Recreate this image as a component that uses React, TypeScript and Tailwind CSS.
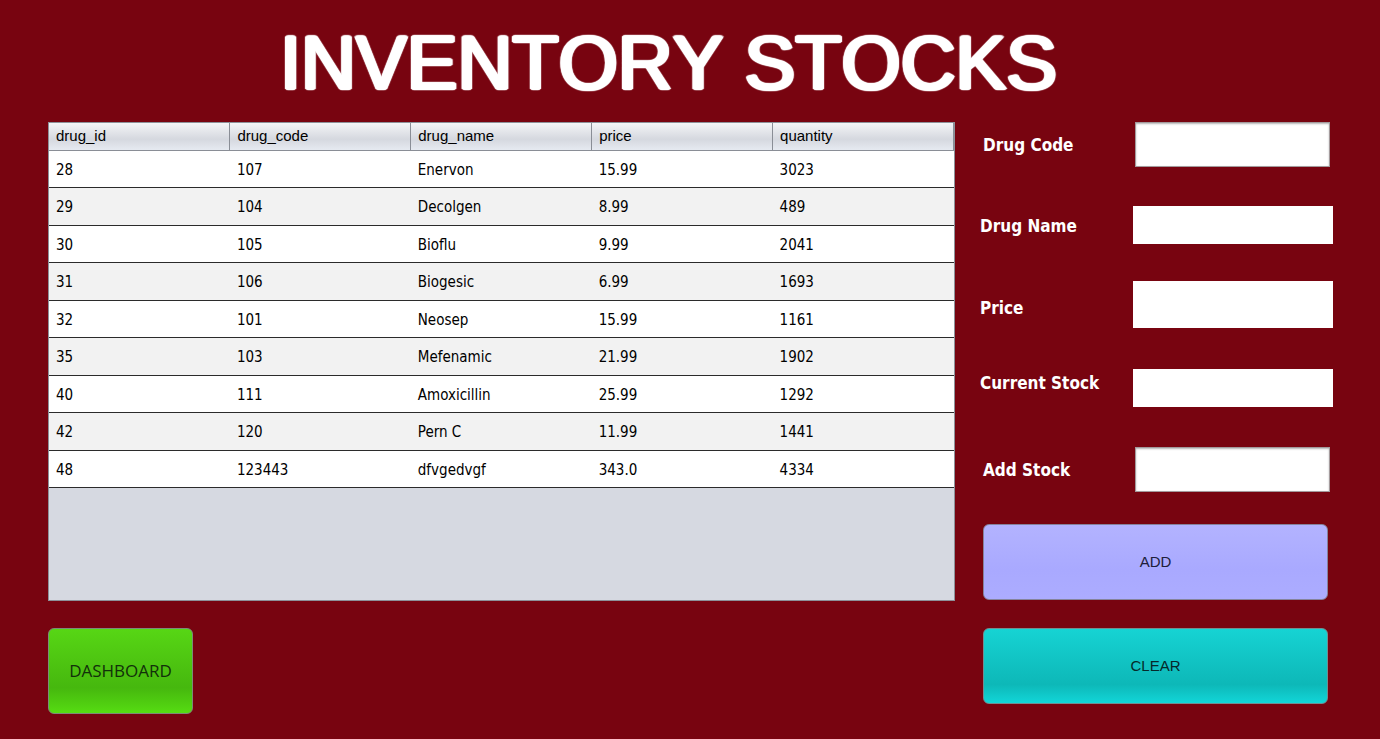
import { useState } from "react";

const columns = ["drug_id", "drug_code", "drug_name", "price", "quantity"];

const rows = [
  ["28", "107", "Enervon", "15.99", "3023"],
  ["29", "104", "Decolgen", "8.99", "489"],
  ["30", "105", "Bioflu", "9.99", "2041"],
  ["31", "106", "Biogesic", "6.99", "1693"],
  ["32", "101", "Neosep", "15.99", "1161"],
  ["35", "103", "Mefenamic", "21.99", "1902"],
  ["40", "111", "Amoxicillin", "25.99", "1292"],
  ["42", "120", "Pern C", "11.99", "1441"],
  ["48", "123443", "dfvgedvgf", "343.0", "4334"],
];

type Field = { id: string; label: string; kind: "edit" | "plain"; row: string; size: string; text: string };

const fields: Field[] = [
  { id: "code", label: "Drug Code", kind: "edit", row: "items-center", size: "h-[45px]", text: "" },
  { id: "name", label: "Drug Name", kind: "plain", row: "items-center mt-[39px]", size: "h-[38px]", text: "pt-0.5" },
  { id: "price", label: "Price", kind: "plain", row: "items-end mt-[37px]", size: "h-[47px]", text: "pb-2" },
  { id: "current", label: "Current Stock", kind: "plain", row: "items-start mt-[41px]", size: "h-[38px]", text: "pt-0.5" },
  { id: "add", label: "Add Stock", kind: "edit", row: "items-center mt-[40px]", size: "h-[45px]", text: "" },
];

function StockTable() {
  return (
    <div className="h-[479px] overflow-hidden border border-[#8d9199] bg-[#d6d9e1]">
      <table className="w-full table-fixed border-collapse text-left text-black">
        <thead>
          <tr className="h-[27px] bg-linear-to-b from-[#f4f5f7] via-[#d5d8df] via-60% to-[#e6eaf1]">
            {columns.map((name) => (
              <th
                key={name}
                scope="col"
                className="border-r border-b border-[#8a8e96] p-0 pl-[7px] font-['Liberation_Sans',Arial,sans-serif] text-[15px] leading-5 font-normal"
              >
                {name}
              </th>
            ))}
          </tr>
        </thead>
        <tbody className="font-['DejaVu_Sans_Condensed','DejaVu_Sans',sans-serif] text-[15px] leading-5">
          {rows.map((row) => (
            <tr key={row[0]} className="border-b border-[#2b2b2b] odd:h-[37px] odd:bg-white even:h-[38px] even:bg-[#f2f2f2]">
              {row.map((value, i) => (
                <td key={columns[i]} className="p-0 pt-0.5 pl-[7px]">
                  {value}
                </td>
              ))}
            </tr>
          ))}
        </tbody>
      </table>
    </div>
  );
}

export default function App() {
  const [values, setValues] = useState<Record<string, string>>({});

  return (
    <main className="min-h-screen bg-[#780410] pr-[47px] pb-6 pl-12">
      <h1 className="h-[122px] pt-5 pr-11 text-center font-['Liberation_Sans',Arial,sans-serif] text-[76px] leading-[86px] font-normal text-white [font-kerning:none] [text-shadow:2px_0_1px_#fff,-2px_0_1px_#fff,0_1px_1px_#fff,0_-1px_1px_#fff,1px_1px_1px_#fff,-1px_1px_1px_#fff,1px_-1px_1px_#fff,-1px_-1px_1px_#fff,2px_0_1px_#fff,-2px_0_1px_#fff]">
        INVENTORY STOCKS
      </h1>
      <div className="flex gap-[25px]">
        <section className="min-w-0 flex-1">
          <StockTable />
          <button
            type="button"
            className="mt-[27px] h-[86px] w-[145px] rounded-md border border-[#7d8a78] bg-linear-to-b from-[#57d615] via-[#46b80e] via-70% to-[#56dc12] font-['Open_Sans','Noto_Sans',sans-serif] text-[17px] text-[#12300a]"
          >
            DASHBOARD
          </button>
        </section>
        <form className="w-[353px] shrink-0" onSubmit={(e) => e.preventDefault()}>
          {fields.map((f) => (
            <div
              key={f.id}
              className={`flex justify-between ${f.row} ${f.kind === "edit" ? "px-[3px]" : ""}`}
            >
              <label
                htmlFor={f.id}
                className={`font-['DejaVu_Sans_Condensed','DejaVu_Sans',sans-serif] text-[17px] leading-6 font-bold text-white ${f.text}`}
              >
                {f.label}
              </label>
              <input
                id={f.id}
                value={values[f.id] ?? ""}
                onChange={(e) => setValues({ ...values, [f.id]: e.target.value })}
                className={`bg-white px-2 ${f.size} ${
                  f.kind === "edit"
                    ? "w-[195px] border border-[#a39a9c] shadow-[inset_0_1px_2px_#b5b5b5]"
                    : "w-[200px]"
                }`}
              />
            </div>
          ))}
          <div className="mt-8 flex flex-col gap-7 pr-[5px] pl-[3px] font-['Liberation_Sans',Arial,sans-serif] text-[15px]">
            <button
              type="submit"
              className="h-[76px] rounded-md border border-[#85839c] bg-linear-to-b from-[#b3b3ff] via-[#a9a9ff] via-60% to-[#acacff] text-[#20203a]"
            >
              ADD
            </button>
            <button
              type="button"
              onClick={() => setValues({})}
              className="h-[76px] rounded-md border border-[#6f8f92] bg-linear-to-b from-[#16d3d3] via-[#0db8b8] via-75% to-[#12d6d8] text-[#06292a]"
            >
              CLEAR
            </button>
          </div>
        </form>
      </div>
    </main>
  );
}
